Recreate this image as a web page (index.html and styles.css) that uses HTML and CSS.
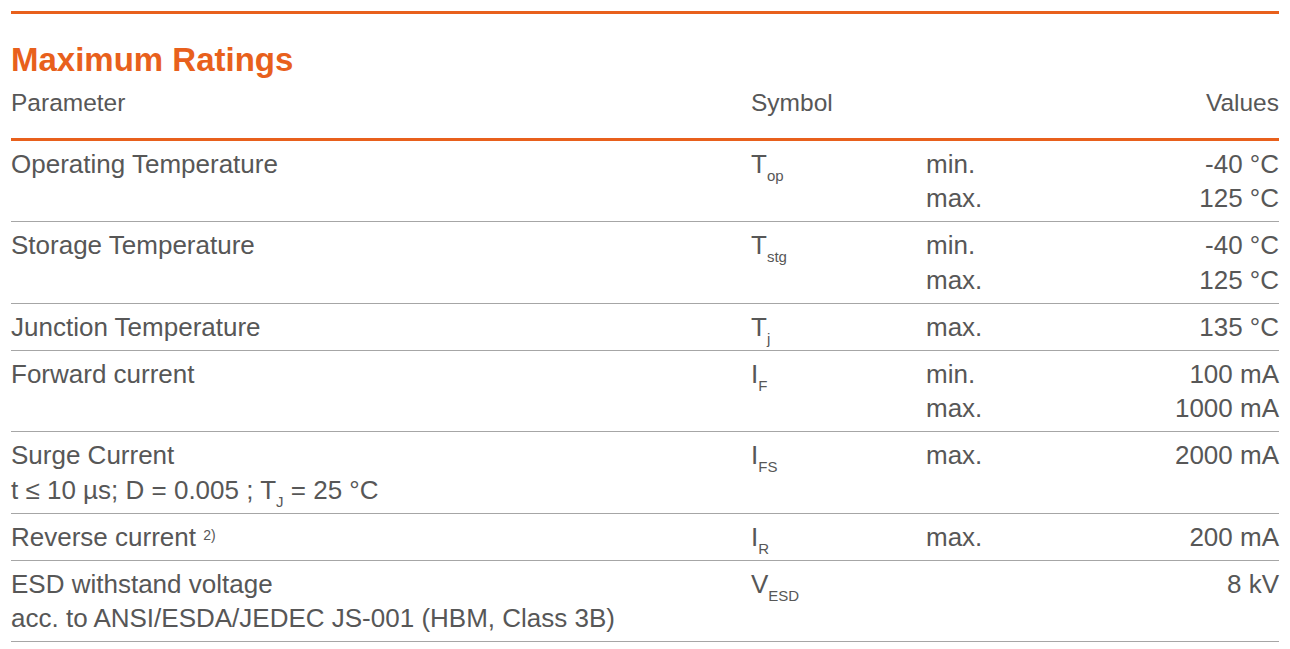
FILE: index.html
```html
<!DOCTYPE html>
<html lang="en">
<head>
<meta charset="utf-8">
<title>Maximum Ratings</title>
<link rel="stylesheet" href="styles.css">
</head>
<body>
<section class="ratings">
  <h1 class="title">Maximum Ratings</h1>
  <div class="table">
    <div class="row head">
      <div class="c-param">Parameter</div>
      <div class="c-sym">Symbol</div>
      <div class="c-lim"></div>
      <div class="c-val">Values</div>
    </div>
    <div class="row">
      <div class="c-param">Operating Temperature</div>
      <div class="c-sym">T<span class="sub">op</span></div>
      <div class="c-lim">min.<br>max.</div>
      <div class="c-val">-40 °C<br>125 °C</div>
    </div>
    <div class="row">
      <div class="c-param">Storage Temperature</div>
      <div class="c-sym">T<span class="sub">stg</span></div>
      <div class="c-lim">min.<br>max.</div>
      <div class="c-val">-40 °C<br>125 °C</div>
    </div>
    <div class="row">
      <div class="c-param">Junction Temperature</div>
      <div class="c-sym">T<span class="sub">j</span></div>
      <div class="c-lim">max.</div>
      <div class="c-val">135 °C</div>
    </div>
    <div class="row">
      <div class="c-param">Forward current</div>
      <div class="c-sym">I<span class="sub">F</span></div>
      <div class="c-lim">min.<br>max.</div>
      <div class="c-val">100 mA<br>1000 mA</div>
    </div>
    <div class="row">
      <div class="c-param">Surge Current<br>t ≤ 10 µs; D = 0.005 ; T<span class="sub">J</span> = 25 °C</div>
      <div class="c-sym">I<span class="sub">FS</span></div>
      <div class="c-lim">max.</div>
      <div class="c-val">2000 mA</div>
    </div>
    <div class="row">
      <div class="c-param">Reverse current <span class="sup">2)</span></div>
      <div class="c-sym">I<span class="sub">R</span></div>
      <div class="c-lim">max.</div>
      <div class="c-val">200 mA</div>
    </div>
    <div class="row">
      <div class="c-param">ESD withstand voltage<br>acc. to ANSI/ESDA/JEDEC JS-001 (HBM, Class 3B)</div>
      <div class="c-sym">V<span class="sub">ESD</span></div>
      <div class="c-lim"></div>
      <div class="c-val">8 kV</div>
    </div>
  </div>
</section>
</body>
</html>
```

FILE: styles.css
```css
html, body {
  margin: 0;
  padding: 0;
  background: #ffffff;
}

body {
  padding: 11px 11px 0;
  font-family: "Liberation Sans", Arial, sans-serif;
  color: #575757;
}

.ratings {
  border-top: 3px solid #e8601c;
}

.title {
  margin: 27px 0 0;
  font-size: 33px;
  line-height: 38px;
  font-weight: bold;
  color: #e8601c;
}

.table {
  display: flex;
  flex-direction: column;
}

.row {
  display: grid;
  grid-template-columns: 740px 175px 1fr auto;
  font-size: 26px;
  line-height: 34.2px;
  padding: 6px 0;
  border-bottom: 1px solid #a6a6a6;
}

.row.head {
  font-size: 24.5px;
  line-height: 34px;
  padding: 7px 0 18px;
  border-bottom: 3px solid #e8601c;
}

.c-val {
  text-align: right;
}

.sub {
  font-size: 15px;
  line-height: 0;
  vertical-align: -8px;
}

.sup {
  font-size: 14px;
  line-height: 0;
  vertical-align: 6px;
}
```
